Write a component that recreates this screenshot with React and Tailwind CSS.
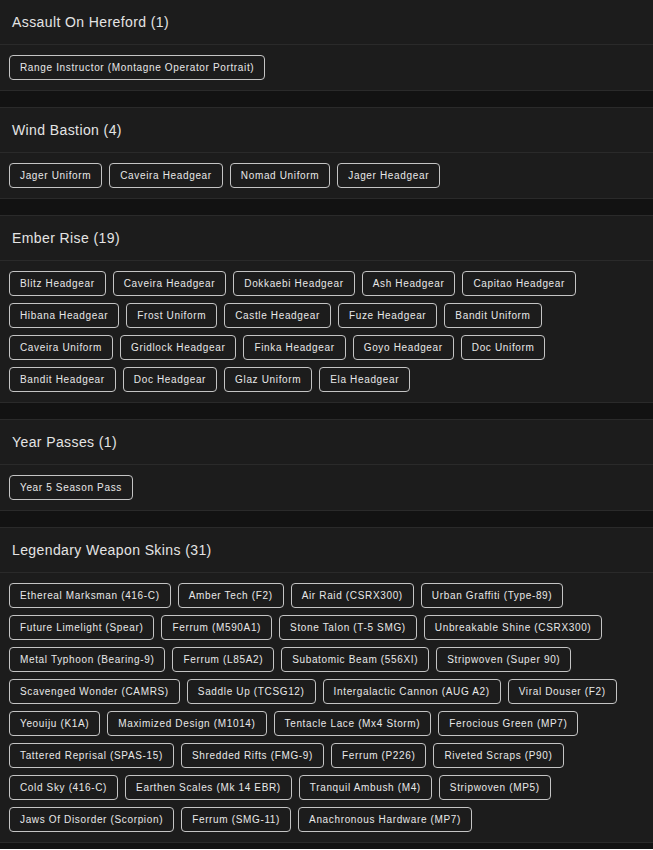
const sections = [
  {
    title: 'Assault On Hereford',
    items: ['Range Instructor (Montagne Operator Portrait)'],
  },
  {
    title: 'Wind Bastion',
    items: ['Jager Uniform', 'Caveira Headgear', 'Nomad Uniform', 'Jager Headgear'],
  },
  {
    title: 'Ember Rise',
    items: [
      'Blitz Headgear', 'Caveira Headgear', 'Dokkaebi Headgear', 'Ash Headgear', 'Capitao Headgear',
      'Hibana Headgear', 'Frost Uniform', 'Castle Headgear', 'Fuze Headgear', 'Bandit Uniform',
      'Caveira Uniform', 'Gridlock Headgear', 'Finka Headgear', 'Goyo Headgear', 'Doc Uniform',
      'Bandit Headgear', 'Doc Headgear', 'Glaz Uniform', 'Ela Headgear',
    ],
  },
  {
    title: 'Year Passes',
    items: ['Year 5 Season Pass'],
  },
  {
    title: 'Legendary Weapon Skins',
    items: [
      'Ethereal Marksman (416-C)', 'Amber Tech (F2)', 'Air Raid (CSRX300)', 'Urban Graffiti (Type-89)',
      'Future Limelight (Spear)', 'Ferrum (M590A1)', 'Stone Talon (T-5 SMG)', 'Unbreakable Shine (CSRX300)',
      'Metal Typhoon (Bearing-9)', 'Ferrum (L85A2)', 'Subatomic Beam (556XI)', 'Stripwoven (Super 90)',
      'Scavenged Wonder (CAMRS)', 'Saddle Up (TCSG12)', 'Intergalactic Cannon (AUG A2)', 'Viral Douser (F2)',
      'Yeouiju (K1A)', 'Maximized Design (M1014)', 'Tentacle Lace (Mx4 Storm)', 'Ferocious Green (MP7)',
      'Tattered Reprisal (SPAS-15)', 'Shredded Rifts (FMG-9)', 'Ferrum (P226)', 'Riveted Scraps (P90)',
      'Cold Sky (416-C)', 'Earthen Scales (Mk 14 EBR)', 'Tranquil Ambush (M4)', 'Stripwoven (MP5)',
      'Jaws Of Disorder (Scorpion)', 'Ferrum (SMG-11)', 'Anachronous Hardware (MP7)',
    ],
  },
];

const Section = ({ title, items }) => (
  <div className="bg-[#1c1c1c] border-y border-[#2a2a2a]">
    <div className="h-[45px] flex items-center px-3 border-b border-[#2a2a2a]">
      <h2 className="text-[14px] tracking-[0.4px] text-[#e4e4e4]">
        {title} ({items.length})
      </h2>
    </div>
    <div className="flex flex-wrap gap-[7px] px-[9px] py-[10px]">
      {items.map((item, i) => (
        <span
          key={i}
          className="h-[25px] flex items-center px-[10px] border border-[#c4c4c4] rounded-[4px] text-[10px] tracking-[0.65px] text-[#e8e8e8] whitespace-nowrap"
        >
          {item}
        </span>
      ))}
    </div>
  </div>
);

export default function App() {
  return (
    <div className="min-h-screen bg-[#121212] font-['Liberation_Sans',sans-serif] -mt-[1px]">
      <div className="flex flex-col gap-4">
        {sections.map((s) => (
          <Section key={s.title} {...s} />
        ))}
      </div>
    </div>
  );
}
